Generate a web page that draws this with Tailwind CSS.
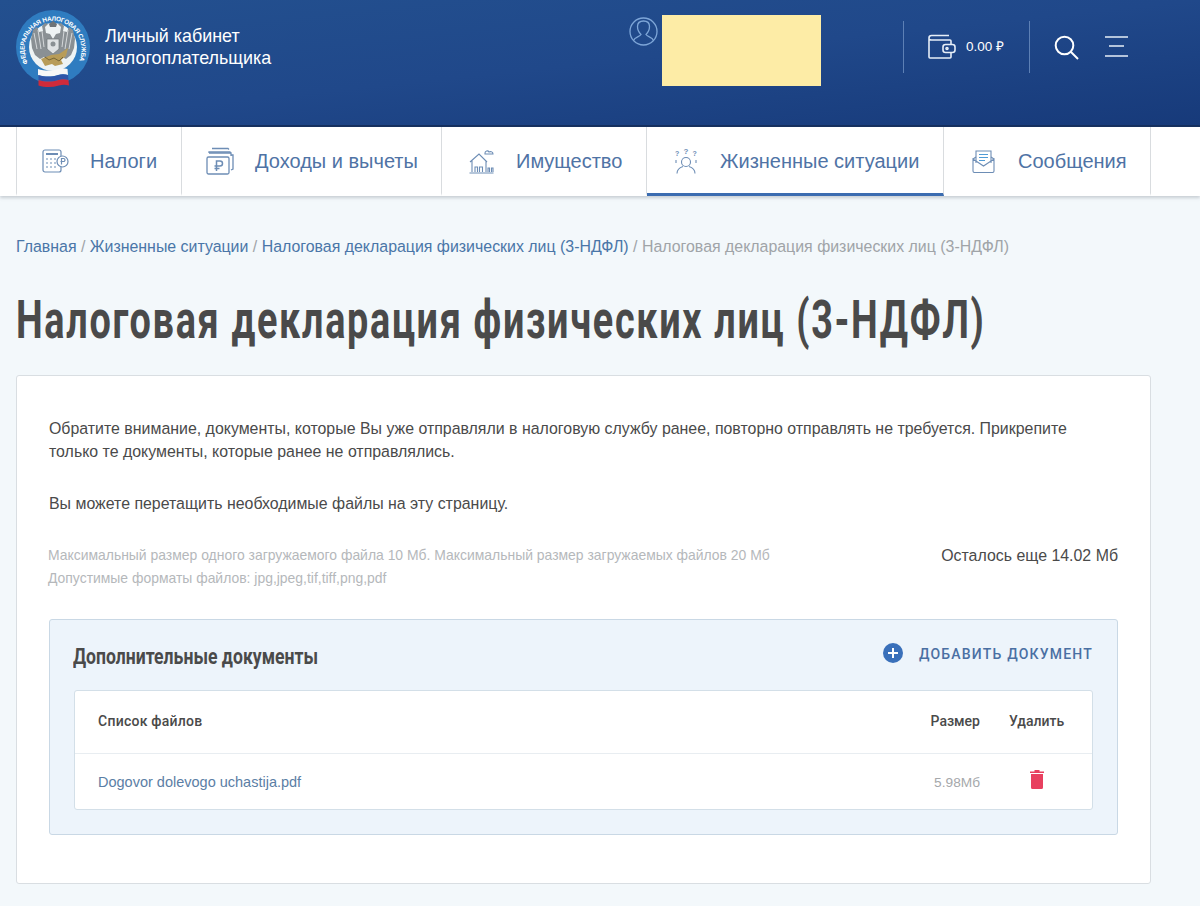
<!DOCTYPE html>
<html lang="ru">
<head>
    <meta charset="UTF-8">
    <title>Личный кабинет налогоплательщика</title>
    <script src="https://cdn.jsdelivr.net/npm/@tailwindcss/browser@4"></script>
</head>
<body class="bg-[#f3f8fb] font-['Liberation_Sans',Arial,sans-serif] text-[#4a4a4a] overflow-hidden">
    <!-- Header -->
    <header class="h-[127px] flex items-start border-b-2 border-[#16305f] bg-gradient-to-br from-[#23508f] via-[#20488a] to-[#173a7a]">
        <svg class="w-[76px] h-[80px] ml-[15px] mt-[9px] shrink-0" viewBox="0 0 76 80">
            <defs>
                <path id="ring" d="M13 54 A28.500 28.500 0 1 1 63 54"></path>
            </defs>
            <circle cx="38" cy="38" r="37" fill="#2f7cc0"></circle>
            <circle cx="38" cy="38" r="24" fill="#eef3f4"></circle>
            <text font-size="6.400" fill="#fff" font-family="Liberation Sans" font-weight="700"><textPath href="#ring" textLength="115" lengthAdjust="spacing">ФЕДЕРАЛЬНАЯ НАЛОГОВАЯ СЛУЖБА</textPath></text>
            <!-- eagle -->
            <path d="M38 30l-3-5-4-1-1-6 3-3-3-1-3 3 1 5-4 1-2-5-4 3-2 9 1 9 3 7 5 4 4-2 3 5h12l3-5 4 2 5-4 3-7 1-9-2-9-4-3-2 5-4-1 1-5-3-3-3 1 3 3-1 6-4 1z" fill="#8a9094"></path>
            <path d="M19 24l3 16M23 21l3 19M27 22l2 16M57 24l-3 16M53 21l-3 19M49 22l-2 16" stroke="#d5d8da" stroke-width="1" fill="none"></path>
            <path d="M34 15l4-3 4 3-1 3h-6z" fill="#6f7579"></path>
            <path d="M32 30h12v10l-6 5-6-5z" fill="#dfe2e4" stroke="#6f7579" stroke-width="0.700"></path>
            <circle cx="38" cy="35" r="2.500" fill="#8a9094"></circle>
            <path d="M26 50l10-4 8-1 9-6-2 8-5 4 2 4-8 2-3-2-7 2z" fill="#b89c58"></path>
            <path d="M30 48l4 3 5-2 5 3 4-4" stroke="#6f5f33" stroke-width="0.900" fill="none"></path>
            <!-- flag -->
            <path d="M23 60c7 2 14 2 20 0 3-1 6-1 9.500 0l.5 6c-3-1-7-1-10 0-7 2-13 2-20 0z" fill="#f7f7f7"></path>
            <path d="M23.500 66c7 2 13 2 20 0 3-1 6-1 9.500 0l.5 5c-3-1-7-1-10 0-7 2-13 2-20 0z" fill="#2f55a8"></path>
            <path d="M23.500 71c7 2 13 2 20 0 3-1 6-1 10 0l.5 5.500c-3-1-7-1-10 0-7 2-14 2-20.500 0z" fill="#cf2b3a"></path>
        </svg>
        <div class="ml-[14px] mt-[25px] text-white text-[17.900px] leading-[22px] w-[300px]">Личный кабинет<br>налогоплательщика</div>
        <svg class="w-[29px] h-[29px] ml-[224px] mt-[17px] shrink-0" viewBox="0 0 29 29" fill="none" stroke="#7ea6d8" stroke-width="1.300">
            <circle cx="14.500" cy="14.500" r="13.500"></circle>
            <path d="M4.500 23.500c1-3.500 6-3.500 7.500-6-3-3-3.500-5-3.500-8 0-3.500 2.500-5.500 6-5.500s6 2 6 5.500c0 3-.5 5-3.500 8 1.500 2.500 6.500 2.500 7.500 6"></path>
        </svg>
        <div class="w-[159px] h-[71px] ml-[4px] mt-[15px] bg-[#fdeca6] shrink-0"></div>
        <div class="w-px h-[52px] mt-[21px] ml-[82px] bg-[#5d80b5] shrink-0"></div>
        <svg class="w-[28px] h-[25px] ml-[24px] mt-[34px] shrink-0" viewBox="0 0 28 25" fill="none" stroke="#e6eef8" stroke-width="1.600">
            <path d="M21 1.500H3.500C2 1.500 1 2.500 1 4v19c0 .5.500 1 1 1h20c.500 0 1-.500 1-1v-4M1 4.500c0 .800 1 1.500 2.500 1.500H22c.500 0 1 .500 1 1v4"></path>
            <rect x="15" y="10.500" width="12" height="8" rx="2.500"></rect>
            <circle cx="19" cy="14.500" r="1"></circle>
        </svg>
        <div class="ml-[10px] mt-[38px] text-white text-[13.500px] leading-[18px] w-[63px] shrink-0">0.00 ₽</div>
        <div class="w-px h-[52px] mt-[21px] bg-[#5d80b5] shrink-0"></div>
        <svg class="w-[25px] h-[25px] ml-[24px] mt-[35px] shrink-0" viewBox="0 0 25 25" fill="none" stroke="#fff" stroke-width="2">
            <circle cx="10.500" cy="10.500" r="8.800"></circle>
            <path d="M17 17l7 7"></path>
        </svg>
        <svg class="w-[23px] h-[21px] ml-[26px] mt-[36px] shrink-0" viewBox="0 0 23 21" fill="none" stroke="#e6eef8" stroke-width="1.700">
            <path d="M0 1h23M4 10h15M0 20h23"></path>
        </svg>
    </header>

    <!-- Tabs -->
    <nav class="h-[69px] bg-white shadow-[0_2px_3px_rgba(120,130,140,0.35)]">
        <ul class="flex h-full ml-[16px] text-[20px] text-[#4f73a5]">
            <li class="w-[166px] border-x border-[#d9dcdf] border-b-[3px] border-b-white flex items-center pt-[2px] pl-[25px]">
                <svg class="w-[27px] h-[24px] mr-[21px] shrink-0" viewBox="0 0 27 24" fill="none" stroke="#6d8db5" stroke-width="1.200">
                    <rect x="1" y="1" width="18" height="22" rx="2"></rect>
                    <path d="M4 5h12" stroke-width="2"></path>
                    <path d="M4 10h2M8 10h2M12 10h2M4 14h2M8 14h2M12 14h2M4 18h2M8 18h2M12 18h2"></path>
                    <circle cx="20.500" cy="12.500" r="5.500" fill="#fff"></circle>
                    <path d="M19.500 15.500v-6h2a1.500 1.500 0 010 3h-3"></path>
                </svg>
                <span>Налоги</span>
            </li>
            <li class="w-[260px] border-r border-[#d9dcdf] border-b-[3px] border-b-white flex items-center pt-[2px] pl-[24px]">
                <svg class="w-[28px] h-[28px] mr-[21px] shrink-0" viewBox="0 0 28 28" fill="none" stroke="#6d8db5" stroke-width="1.300">
                    <rect x="1" y="10" width="22" height="17" rx="1.500"></rect>
                    <path d="M3 6V5h21l.5 1M6 1.500h16l1 1M25 8h2v14l-2 1"></path>
                    <path d="M3 6h22v3"></path>
                    <path d="M10.500 24v-10h3.500a2.500 2.500 0 010 5H8.500M8.500 21.500h5" stroke-width="1.500"></path>
                </svg>
                <span>Доходы и вычеты</span>
            </li>
            <li class="w-[205px] border-r border-[#d9dcdf] border-b-[3px] border-b-white flex items-center pt-[2px] pl-[27px]">
                <svg class="w-[25px] h-[26px] mr-[22px] shrink-0" viewBox="0 0 25 26" fill="none" stroke="#6d8db5" stroke-width="1.100">
                    <path d="M1 14L10 6l8 8M3 12v12M17 13v11M.5 25h24"></path>
                    <path d="M6 24v-5h2.500v5M10.500 24v-5h3v5M19 24v-4h1.500v4M22.500 24v-4h1.500v4"></path>
                    <path d="M16 5c0-2 3-3 4-1 2-1 4 0 4 2h-8z"></path>
                </svg>
                <span>Имущество</span>
            </li>
            <li class="w-[297px] border-r border-[#d9dcdf] border-b-[3px] border-b-[#3b6cb0] flex items-center pt-[2px] pl-[27px]">
                <svg class="w-[24px] h-[26px] mr-[22px] shrink-0" viewBox="0 0 24 26" fill="none" stroke="#6d8db5" stroke-width="1.100">
                    <circle cx="12" cy="14" r="4.500"></circle>
                    <path d="M3 25.500c0-4 3-6 6-7M21 25.500c0-4-3-6-6-7"></path>
                    <text x="9.500" y="6" font-size="8" font-weight="700" fill="#6d8db5" stroke="none" font-family="Liberation Sans">?</text>
                    <text x="1" y="8" font-size="7" font-weight="700" fill="#6d8db5" stroke="none" font-family="Liberation Sans">?</text>
                    <text x="18.500" y="8" font-size="7" font-weight="700" fill="#6d8db5" stroke="none" font-family="Liberation Sans">?</text>
                    <path d="M2 12v3M22 12v3"></path>
                </svg>
                <span>Жизненные ситуации</span>
            </li>
            <li class="w-[207px] border-r border-[#d9dcdf] border-b-[3px] border-b-white flex items-center pt-[2px] pl-[28px]">
                <svg class="w-[23px] h-[23px] mr-[23px] shrink-0" viewBox="0 0 23 23" fill="none" stroke="#6d8db5" stroke-width="1.100">
                    <path d="M1 9l3-2M22 9l-3-2M1 9v12a1.500 1.500 0 001.500 1.500h18A1.500 1.500 0 0022 21V9l-10.500 7z"></path>
                    <path d="M4 13V1h15v12"></path>
                    <path d="M7 4.500h9M7 7.500h9M7 10.500h6" stroke="#4f9bd6"></path>
                </svg>
                <span>Сообщения</span>
            </li>
        </ul>
    </nav>

    <main class="px-[16px]">
        <!-- Breadcrumbs -->
        <div class="mt-[41px] text-[15.920px] leading-[20px] text-[#a0a4a8]">
            <a class="text-[#4a76a8]">Главная</a> / <a class="text-[#4a76a8]">Жизненные ситуации</a> / <a class="text-[#4a76a8]">Налоговая декларация физических лиц (3-НДФЛ)</a> / Налоговая декларация физических лиц (3-НДФЛ)
        </div>

        <h1 class="mt-[30px] h-[66px] text-[54px] leading-[66px] font-['Roboto',sans-serif] font-bold text-[#4a4a4a] whitespace-nowrap origin-left scale-x-[0.70] tracking-[2.4px]">Налоговая декларация физических лиц (3-НДФЛ)</h1>

        <!-- Card -->
        <section class="mt-[22px] w-[1135px] h-[509px] bg-white border border-[#d9dee2] rounded-[3px] px-[32px] pt-[42px]">
            <p class="text-[15.920px] leading-[22.500px]">Обратите внимание, документы, которые Вы уже отправляли в налоговую службу ранее, повторно отправлять не требуется. Прикрепите только те документы, которые ранее не отправлялись.</p>
            <p class="mt-[29px] text-[15.920px] leading-[23px]">Вы можете перетащить необходимые файлы на эту страницу.</p>

            <div class="mt-[29px] h-[47px] flex justify-between items-start">
                <div class="-ml-px text-[13.930px] leading-[23px] text-[#b5b8bb]">
                    <p>Максимальный размер одного загружаемого файла 10 Мб. Максимальный размер загружаемых файлов 20 Мб</p>
                    <p>Допустимые форматы файлов: jpg,jpeg,tif,tiff,png,pdf</p>
                </div>
                <div class="text-[15.920px] leading-[23px]">Осталось еще 14.02 Мб</div>
            </div>

            <!-- Documents -->
            <div class="mt-[28px] h-[216px] bg-[#edf4fb] border border-[#c9d8e5] rounded-[3px] px-[24px] pt-[20px]">
                <div class="flex justify-between items-center h-[32px]">
                    <h2 class="-ml-px mt-[2px] text-[22px] leading-[32px] font-['Roboto',sans-serif] font-bold whitespace-nowrap origin-left scale-x-[0.80]">Дополнительные документы</h2>
                    <a class="flex items-center mb-[4px] text-[14px] font-['Roboto',sans-serif] font-medium tracking-[1.200px] text-[#4a6fa3] whitespace-nowrap">
                        <svg class="w-[20px] h-[20px] mr-[16px] mb-[2px]" viewBox="0 0 20 20">
                            <circle cx="10" cy="10" r="10" fill="#3a70ba"></circle>
                            <path d="M10 5v10M5 10h10" stroke="#fff" stroke-width="2"></path>
                        </svg>
                        ДОБАВИТЬ ДОКУМЕНТ
                    </a>
                </div>
                <div class="mt-[18px] h-[120px] bg-white border border-[#d3dfe8] rounded-[3px]">
                    <div class="h-[63px] flex items-center border-b border-[#e8edf1] pl-[23px] pb-[2px] text-[14px] font-['Roboto',sans-serif] font-medium">
                        <span class="flex-1 tracking-[0.250px]">Список файлов</span>
                        <span class="w-[60px] text-right">Размер</span>
                        <span class="w-[112px] pl-[29px]">Удалить</span>
                    </div>
                    <div class="h-[55px] flex items-center pl-[23px]">
                        <span class="flex-1 text-[14.500px] text-[#5b7ea5] mt-[3px]">Dogovor dolevogo uchastija.pdf</span>
                        <span class="w-[60px] text-right text-[13.700px] text-[#a5a8ab] mt-[3px]">5.98Мб</span>
                        <span class="w-[112px] pl-[49px] mb-[5px]">
                            <svg class="w-[16px] h-[20px]" viewBox="0 0 16 20" fill="#e8405f">
                                <path d="M1 2.500h4.500V1h5v1.500H15V4H1zM2 5h12v13.500a1.500 1.500 0 01-1.500 1.500h-9A1.500 1.500 0 012 18.500z"></path>
                            </svg>
                        </span>
                    </div>
                </div>
            </div>
        </section>
    </main>
</body>
</html>
